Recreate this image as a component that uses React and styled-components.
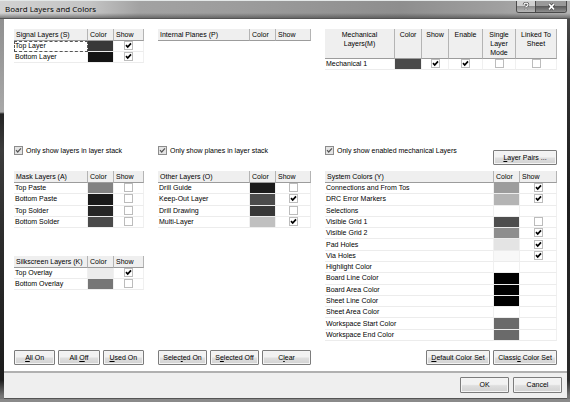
import React, { useState } from "react";
import styled, { createGlobalStyle } from "styled-components";

const GlobalStyle = createGlobalStyle`
  * {
    box-sizing: border-box;
  }
  body {
    margin: 0;
    color: #000000;
    font-family: "Liberation Sans", Arial, sans-serif;
    font-size: 7px;
    line-height: 10px;
  }
  button, input {
    font: inherit;
    color: inherit;
    margin: 0;
  }
`;

const Frame = styled.div`
  min-height: 100vh;
  display: flex;
  flex-direction: column;
  padding: 0 3px 3px 4px;
  background:
    linear-gradient(#8a8a8a, #8a8a8a) bottom / 100% 3px no-repeat,
    linear-gradient(to bottom, #8c8c8c 0, #9a9a9a 60px, #a8a8a8 112px, #242424 114px, #3c3c3c 150px, #2c2c2c 240px, #1c1c1c 380px, #777777 396px) left / 4px 100% no-repeat,
    linear-gradient(to bottom, #555555 0, #333333 60px, #1e1e1e 200px, #2a2a2a 380px, #777777 396px);
`;

const TitleBar = styled.header`
  display: flex;
  justify-content: space-between;
  height: 19px;
  margin: 0 -3px 0 -4px;
  padding: 0 3px 0 5px;
  border-top: 1px solid #e4e8e8;
  border-bottom: 1px solid #555555;
  background:
    linear-gradient(to bottom, transparent 12px, rgba(60, 60, 60, 0.55) 17px),
    linear-gradient(to right, #d2d2d2 0, #c4c4c4 90px, #a2a2a2 140px, #9c9c9c 240px, #8e8e8e 400px, #a0a0a0 500px, #b4b4b4 100%);
`;

const Title = styled.h1`
  margin: 0;
  padding-top: 2px;
  font-family: "Open Sans", "Noto Sans", sans-serif;
  font-size: 8px;
  font-weight: 400;
  line-height: 12px;
`;

const WindowButtons = styled.div`
  display: flex;
  height: 12px;
  border: 1px solid #4a4a4a;
  border-top: 0;
  border-radius: 0 0 3px 3px;
  overflow: hidden;
`;

const WindowButton = styled.button`
  display: flex;
  align-items: center;
  justify-content: center;
  width: ${(props) => (props.$close ? "30px" : "19px")};
  padding: 0;
  border: 0;
  border-right: ${(props) => (props.$close ? "0" : "1px solid #4a4a4a")};
  background: ${(props) =>
    props.$close
      ? "linear-gradient(#999999 0 45%, #5c5c5c 50%, #909090)"
      : "linear-gradient(#d0d0d0 0 45%, #909090 50%, #b8b8b8)"};
`;

const Panel = styled.main`
  flex: 1;
  display: grid;
  grid-template-columns: minmax(0, 130fr) minmax(0, 153fr) minmax(0, 232fr);
  grid-template-rows: 117px 25px 1fr auto;
  column-gap: 14px;
  padding: 10px 10px 6px;
  background: #ffffff;
  border-bottom: 2px solid #b0b0b0;
`;

const Stack = styled.div`
  display: flex;
  flex-direction: column;
  gap: 28px;
`;

const FilterRow = styled.div`
  display: flex;
  justify-content: space-between;
  align-items: flex-start;
`;

const FilterLabel = styled.label`
  display: flex;
  align-items: center;
  gap: 3px;
  height: 9px;
  white-space: nowrap;
`;

const ButtonRow = styled.div`
  display: flex;
  gap: 3px;
  justify-content: ${(props) => props.$align || "flex-start"};
`;

const Button = styled.button`
  flex: ${(props) => (props.$width ? "none" : "1")};
  width: ${(props) => props.$width || "auto"};
  height: ${(props) => props.$height || "15px"};
  margin-top: ${(props) => props.$drop || "0"};
  padding: 0;
  border: 1px solid #7c7c7c;
  border-radius: 1px;
  background: linear-gradient(#f2f2f2 0 45%, #dedede 55%, #d2d2d2);
  box-shadow: inset 0 0 0 1px #f4f4f4;
  line-height: 10px;
  white-space: nowrap;
`;

const Footer = styled.footer`
  display: flex;
  justify-content: flex-end;
  gap: 4px;
  padding: 4px 5px 5px;
  background: #efefef;
  border-bottom: 1px solid #555555;
`;

const Table = styled.table`
  width: 100%;
  height: ${(props) => props.$height};
  table-layout: fixed;
  border-collapse: separate;
  border-spacing: 0;
`;

const HeadCell = styled.th`
  width: ${(props) => props.$width || "auto"};
  height: ${(props) => (props.$tall ? "30px" : "12px")};
  padding: ${(props) => (props.$tall ? "1px 1px 0" : "0 2px")};
  border-right: 1px solid #b4b4b4;
  border-bottom: 1px solid #9c9c9c;
  background: #efefef;
  font-weight: 400;
  line-height: ${(props) => (props.$tall ? "9px" : "10px")};
  text-align: ${(props) => (props.$tall ? "center" : "left")};
  vertical-align: ${(props) => (props.$tall ? "top" : "middle")};
  white-space: ${(props) => (props.$tall ? "normal" : "nowrap")};
`;

const Cell = styled.td`
  height: 11px;
  padding: ${(props) => (props.$name ? "0 1px" : "0")};
  border-right: 1px solid #f0f0f0;
  border-bottom: 1px solid #ececec;
  outline: ${(props) => (props.$focused ? "1px dashed #555555" : "none")};
  outline-offset: -1px;
  line-height: 10px;
  text-align: ${(props) => (props.$name ? "left" : "center")};
  white-space: nowrap;
`;

const Swatch = styled(Cell)`
  background: ${(props) => props.$color} padding-box;
`;

const Tick = styled.span`
  display: inline-grid;
  width: 9px;
  height: 9px;
  vertical-align: top;
  input, svg {
    grid-area: 1 / 1;
    width: 9px;
    height: 9px;
  }
  input {
    appearance: none;
    border: 1px solid ${(props) => (props.$grey ? "#8c8c8c" : "#bcbcbc")};
    background: ${(props) => (props.$grey ? "#e4e4e4" : "#ffffff")};
  }
  svg {
    pointer-events: none;
  }
`;

const CheckBox = ({ label, initial, grey }) => {
  const [checked, setChecked] = useState(initial);

  return (
    <Tick $grey={grey}>
      <input
        type="checkbox"
        aria-label={label}
        checked={checked}
        onChange={() => setChecked(!checked)}
      />
      {checked && (
        <svg viewBox="0 0 9 9" aria-hidden="true">
          <path
            d="M2 4.2 L3.7 6 L7 2.4"
            fill="none"
            stroke={grey ? "#555555" : "#000000"}
            strokeWidth={grey ? 1.2 : 1.7}
          />
        </svg>
      )}
    </Tick>
  );
};

// [name, color, shown]; a missing third value leaves the Show cell empty
const signalLayers = [
  ["Top Layer", "#383838", true],
  ["Bottom Layer", "#141414", true],
];
const maskLayers = [
  ["Top Paste", "#828282", false],
  ["Bottom Paste", "#1a1a1a", false],
  ["Top Solder", "#262626", false],
  ["Bottom Solder", "#4a4a4a", false],
];
const silkscreenLayers = [
  ["Top Overlay", "#ececec", true],
  ["Bottom Overlay", "#767676", false],
];
const otherLayers = [
  ["Drill Guide", "#1c1c1c", false],
  ["Keep-Out Layer", "#4c4c4c", true],
  ["Drill Drawing", "#383838", false],
  ["Multi-Layer", "#c0c0c0", true],
];
const systemColors = [
  ["Connections and From Tos", "#9c9c9c", true],
  ["DRC Error Markers", "#b4b4b4", true],
  ["Selections", "#ffffff"],
  ["Visible Grid 1", "#4e4e4e", false],
  ["Visible Grid 2", "#8e8e8e", true],
  ["Pad Holes", "#e4e4e4", true],
  ["Via Holes", "#f8f8f8", true],
  ["Highlight Color", "#ffffff"],
  ["Board Line Color", "#000000"],
  ["Board Area Color", "#000000"],
  ["Sheet Line Color", "#000000"],
  ["Sheet Area Color", "#ffffff"],
  ["Workspace Start Color", "#6a6a6a"],
  ["Workspace End Color", "#6a6a6a"],
];

const LayerTable = ({ title, rows, height, showWidth, focused }) => (
  <Table $height={height}>
    <thead>
      <tr>
        <HeadCell>{title}</HeadCell>
        <HeadCell $width="26px">Color</HeadCell>
        <HeadCell $width={showWidth}>Show</HeadCell>
      </tr>
    </thead>
    <tbody>
      {rows.map(([name, color, shown]) => (
        <tr key={name}>
          <Cell $name $focused={name === focused}>{name}</Cell>
          <Swatch $color={color} />
          <Cell>
            {shown !== undefined && <CheckBox label={`Show ${name}`} initial={shown} />}
          </Cell>
        </tr>
      ))}
    </tbody>
  </Table>
);

const MechanicalTable = () => (
  <Table>
    <thead>
      <tr>
        <HeadCell $tall>Mechanical<br />Layers(M)</HeadCell>
        <HeadCell $tall $width="27px">Color</HeadCell>
        <HeadCell $tall $width="27px">Show</HeadCell>
        <HeadCell $tall $width="34px">Enable</HeadCell>
        <HeadCell $tall $width="33px">Single<br />Layer<br />Mode</HeadCell>
        <HeadCell $tall $width="41px">Linked To<br />Sheet</HeadCell>
      </tr>
    </thead>
    <tbody>
      <tr>
        <Cell $name>Mechanical 1</Cell>
        <Swatch $color="#4a4a4a" />
        <Cell><CheckBox label="Show Mechanical 1" initial={true} /></Cell>
        <Cell><CheckBox label="Enable Mechanical 1" initial={true} /></Cell>
        <Cell><CheckBox label="Single Layer Mode" initial={false} /></Cell>
        <Cell><CheckBox label="Linked To Sheet" initial={false} /></Cell>
      </tr>
    </tbody>
  </Table>
);

const Filter = ({ children }) => (
  <FilterLabel>
    <CheckBox initial={true} grey />
    {children}
  </FilterLabel>
);

const App = () => (
  <>
    <GlobalStyle />
    <Frame>
      <TitleBar>
        <Title>Board Layers and Colors</Title>
        <WindowButtons>
          <WindowButton aria-label="Help">
            <svg width="8" height="9" viewBox="0 0 8 9">
              <path d="M2 3 Q2 1.2 4 1.2 Q6 1.2 6 2.8 Q6 4 4 4.6 V5.6 M4 6.8 V8" fill="none" stroke="#444444" strokeWidth="2.4" />
              <path d="M2 3 Q2 1.2 4 1.2 Q6 1.2 6 2.8 Q6 4 4 4.6 V5.6 M4 6.8 V8" fill="none" stroke="#ffffff" strokeWidth="1.2" />
            </svg>
          </WindowButton>
          <WindowButton $close aria-label="Close">
            <svg width="9" height="9" viewBox="0 0 9 9">
              <path d="M2 2 L7 7.4 M7 2 L2 7.4" stroke="#444444" strokeWidth="3" />
              <path d="M2 2 L7 7.4 M7 2 L2 7.4" stroke="#ffffff" strokeWidth="1.7" />
            </svg>
          </WindowButton>
        </WindowButtons>
      </TitleBar>
      <Panel>
        <div>
          <LayerTable title="Signal Layers (S)" rows={signalLayers} height="34px" showWidth="30px" focused="Top Layer" />
        </div>
        <div>
          <LayerTable title="Internal Planes (P)" rows={[]} showWidth="35px" />
        </div>
        <div>
          <MechanicalTable />
        </div>

        <FilterRow>
          <Filter>Only show layers in layer stack</Filter>
        </FilterRow>
        <FilterRow>
          <Filter>Only show planes in layer stack</Filter>
        </FilterRow>
        <FilterRow>
          <Filter>Only show enabled mechanical Layers</Filter>
          <Button $width="64px" $drop="4px"><u>L</u>ayer Pairs ...</Button>
        </FilterRow>

        <Stack>
          <LayerTable title="Mask Layers (A)" rows={maskLayers} height="57px" showWidth="30px" />
          <LayerTable title="Silkscreen Layers (K)" rows={silkscreenLayers} height="34px" showWidth="30px" />
        </Stack>
        <div>
          <LayerTable title="Other Layers (O)" rows={otherLayers} height="57px" showWidth="35px" />
        </div>
        <div>
          <LayerTable title="System Colors (Y)" rows={systemColors} height="170px" showWidth="37px" />
        </div>

        <ButtonRow>
          <Button><u>A</u>ll On</Button>
          <Button>All <u>O</u>ff</Button>
          <Button><u>U</u>sed On</Button>
        </ButtonRow>
        <ButtonRow>
          <Button>Selec<u>t</u>ed On</Button>
          <Button>S<u>e</u>lected Off</Button>
          <Button>C<u>l</u>ear</Button>
        </ButtonRow>
        <ButtonRow $align="flex-end">
          <Button $width="64px"><u>D</u>efault Color Set</Button>
          <Button $width="64px">Classi<u>c</u> Color Set</Button>
        </ButtonRow>
      </Panel>
      <Footer>
        <Button $width="49px" $height="16px">OK</Button>
        <Button $width="49px" $height="16px">Cancel</Button>
      </Footer>
    </Frame>
  </>
);

export default App;
